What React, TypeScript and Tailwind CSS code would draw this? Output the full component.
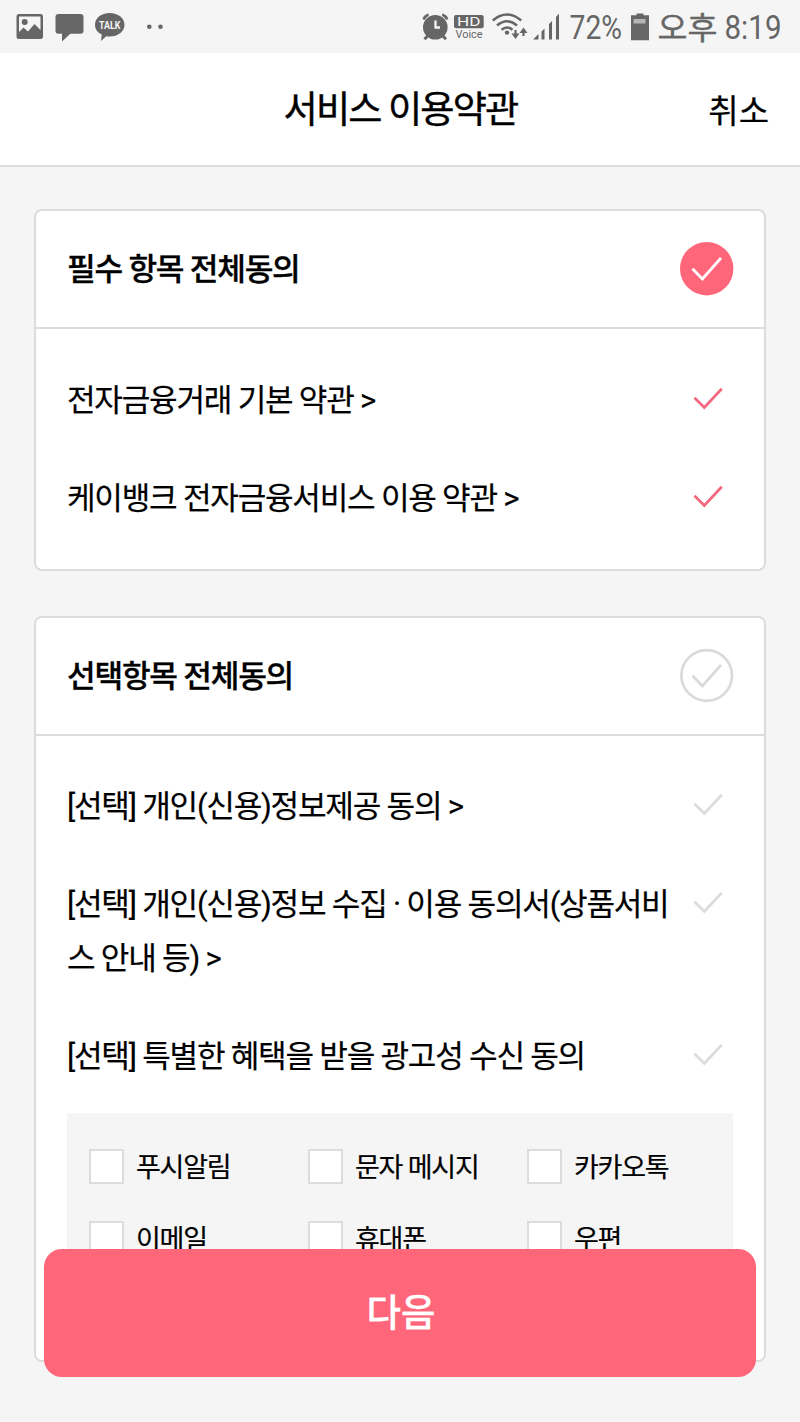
import React from "react";

const KR = "font-[Roboto,'Noto_Sans_CJK_KR',sans-serif]";

function StatusBar() {
  return (
    <div className="flex h-[53px] shrink-0 items-center bg-[#f5f5f5] text-[#666]">
      <svg width="180" height="53" viewBox="0 0 180 53" fill="#666">
        <path
          fillRule="evenodd"
          d="M19 14h21.500a2.500 2.500 0 0 1 2.500 2.500v20a2.500 2.500 0 0 1-2.500 2.500H19a2.500 2.500 0 0 1-2.500-2.500v-20A2.500 2.500 0 0 1 19 14zM19 16.500V32l4.500-4.500 4.500 4 6.500-7.500 6 6V16.500z"
        />
        <circle cx="24.700" cy="22" r="3" />
        <path d="M58.500 14h22a3 3 0 0 1 3 3v13.700a3 3 0 0 1-3 3H70.300L62 41.500v-7.800h-3.500a3 3 0 0 1-3-3V17a3 3 0 0 1 3-3z" />
        <path d="M109.700 13c8.300 0 14.800 5 14.800 11.800s-6.500 11.800-14.800 11.800c-1.300 0-2.400-.1-3.500-.3L101 41l.8-6.400C97.500 32.500 95 29 95 24.800 95 18 101.400 13 109.700 13z" />
        <text x="99" y="29" fill="#f5f5f5" fontSize="10.500" fontWeight="700" textLength="21.500" lengthAdjust="spacingAndGlyphs" fontFamily="Roboto, sans-serif">
          TALK
        </text>
        <circle cx="149.300" cy="26.700" r="2.300" />
        <circle cx="160.500" cy="26.700" r="2.300" />
      </svg>
      <svg className="ml-auto" width="390" height="53" viewBox="410 0 390 53" fill="#666">
        <circle cx="435.300" cy="27.300" r="12.300" />
        <g stroke="#666" strokeWidth="3" fill="none">
          <path d="M423.500 19.500q1.500-3.500 5-5M447.300 19.500q-1.500-3.500-5-5" strokeWidth="2.500" />
          <path d="M428 35.500l-3.500 3.700M442.500 35.500l3.500 3.700" />
        </g>
        <path d="M435.500 20.500v7h4.500" stroke="#f5f5f5" strokeWidth="2.300" fill="none" />
        <rect x="454" y="15" width="29.700" height="13.200" rx="2" />
        <text x="457" y="26.300" fill="#f5f5f5" fontSize="13" textLength="23.500" lengthAdjust="spacingAndGlyphs" fontFamily="Roboto, sans-serif">
          HD
        </text>
        <text x="455.500" y="38.300" fontSize="10.700" textLength="27" lengthAdjust="spacingAndGlyphs" fontFamily="Roboto, sans-serif">
          Voice
        </text>
        <g stroke="#666" strokeWidth="2.500" fill="none">
          <path d="M492.800 20.500q14-12 28.400 0M497 25.500q10-8.500 20 0M501.500 29.800q5.500-4.500 11 0" />
          <path d="M515.500 30v6M523.500 36v-6" strokeWidth="2.200" />
        </g>
        <circle cx="507" cy="32.600" r="2.200" />
        <path d="M511.500 33.500h8l-4 5.500zM519.500 33h8l-4-5.500z" />
        <path d="M533 39.500l5.500-5.500v5.500zM541.500 31.500l3-3v11h-3zM549 24l3-3v18.500h-3zM556 17l3-3.500v26h-3z" />
        <text x="569.500" y="39.300" fontSize="33" textLength="52.500" lengthAdjust="spacingAndGlyphs" fontFamily="Roboto, sans-serif">
          72%
        </text>
        <path d="M636.500 13.500h7v1.700h5.500v25h-18V15.200h5.500z" />
        <rect x="633.500" y="19" width="12" height="4.500" fill="#b5b5b5" />
        <text x="657.500" y="39" fontSize="31" textLength="60" stroke="#666" strokeWidth=".4" lengthAdjust="spacingAndGlyphs" fontFamily="'Noto Sans CJK KR', sans-serif">
          오후
        </text>
        <text x="724.500" y="39.300" fontSize="33" textLength="57" lengthAdjust="spacingAndGlyphs" fontFamily="Roboto, sans-serif">
          8:19
        </text>
      </svg>
    </div>
  );
}

function CircleCheck({ checked }: { checked: boolean }) {
  return (
    <svg width="54" height="54" viewBox="0 0 54 54" fill="none" className="shrink-0">
      {checked ? (
        <circle cx="26.700" cy="26.700" r="26.700" fill="#ff667a" />
      ) : (
        <circle cx="26.700" cy="26.500" r="25.300" stroke="#dadada" strokeWidth="2.700" />
      )}
      <path d="M12.500 26.800L22.400 37L41 16" stroke={checked ? "#fff" : "#dadada"} strokeWidth="2.800" />
    </svg>
  );
}

function RowCheck({ checked }: { checked: boolean }) {
  return (
    <svg width="30" height="54" viewBox="0 0 30 54" fill="none" className="mr-[9px] shrink-0">
      <path d="M1.500 24.800L11.300 34.500L28.800 15.700" stroke={checked ? "#f06a80" : "#dcdcdc"} strokeWidth="2.800" />
    </svg>
  );
}

function CardHeader({ title, checked }: { title: string; checked: boolean }) {
  return (
    <div className="flex h-[118px] items-center justify-between border-b-2 border-[#dcdcdc] pr-[30px] pl-[31px]">
      <h2 className="pt-px text-[31.200px] leading-[54px] font-medium tracking-[-0.040em] [-webkit-text-stroke:0.3px]">{title}</h2>
      <CircleCheck checked={checked} />
    </div>
  );
}

function TermRow({ checked = false, children }: { checked?: boolean; children: React.ReactNode }) {
  return (
    <div className="flex items-start justify-between">
      <p className="-mb-px pt-px text-[31.100px] leading-[54px] tracking-[-0.040em] whitespace-nowrap [-webkit-text-stroke:0.2px]">{children}</p>
      <RowCheck checked={checked} />
    </div>
  );
}

const channels = ["푸시알림", "문자 메시지", "카카오톡", "이메일", "휴대폰", "우편"];

export default function App() {
  return (
    <div className={`relative flex h-[1422px] w-[800px] flex-col overflow-hidden bg-[#f5f5f5] text-black ${KR}`}>
      <StatusBar />
      <header className="grid h-[114px] shrink-0 grid-cols-[1fr_auto_1fr] items-center border-b-2 border-[#dcdcdc] bg-white pr-[31px] pl-8">
        <span />
        <h1 className="pt-1 text-[37.200px] leading-none tracking-[-0.050em] [-webkit-text-stroke:0.4px]">서비스 이용약관</h1>
        <button className="justify-self-end pt-1 text-[33px] leading-none [-webkit-text-stroke:0.2px]">취소</button>
      </header>

      <main className="flex flex-col gap-[45px] px-[34px] pt-[42px]">
        <section className="h-[362px] rounded-lg border-2 border-[#dcdcdc] bg-white">
          <CardHeader title="필수 항목 전체동의" checked />
          <div className="flex flex-col gap-11 py-11 pr-8 pl-[31px]">
            <TermRow checked>전자금융거래 기본 약관 &gt;</TermRow>
            <TermRow checked>케이뱅크 전자금융서비스 이용 약관 &gt;</TermRow>
          </div>
        </section>

        <section className="h-[746px] rounded-lg border-2 border-[#dcdcdc] bg-white">
          <CardHeader title="선택항목 전체동의" checked={false} />
          <div className="flex flex-col gap-11 pt-[43px] pr-8 pl-[31px]">
            <TermRow>[선택] 개인(신용)정보제공 동의 &gt;</TermRow>
            <TermRow>
              [선택] 개인(신용)정보 수집 · 이용 동의서(상품서비
              <br />스 안내 등) &gt;
            </TermRow>
            <TermRow>[선택] 특별한 혜택을 받을 광고성 수신 동의</TermRow>
          </div>
          <div className="mt-[30px] mr-[31px] ml-[31px] grid h-[216px] grid-cols-[219px_219px_1fr] content-start gap-y-[37px] bg-[#f5f5f5] pt-9 pl-[22px]">
            {channels.map((name) => (
              <label key={name} className="flex h-[35px] items-center gap-3">
                <span className="size-[35px] border-2 border-[#dcdcdc] bg-white" />
                <span className="pt-[3px] text-[27px] leading-none tracking-[-0.045em] [-webkit-text-stroke:0.2px]">{name}</span>
              </label>
            ))}
          </div>
        </section>
      </main>

      <button className="absolute top-[1249px] left-[44px] h-[128px] w-[712px] rounded-[18px] bg-[#ff667a] pt-0.5 pl-0.5 text-[37.500px] leading-none font-medium text-white [-webkit-text-stroke:0.3px]">
        다음
      </button>
    </div>
  );
}
